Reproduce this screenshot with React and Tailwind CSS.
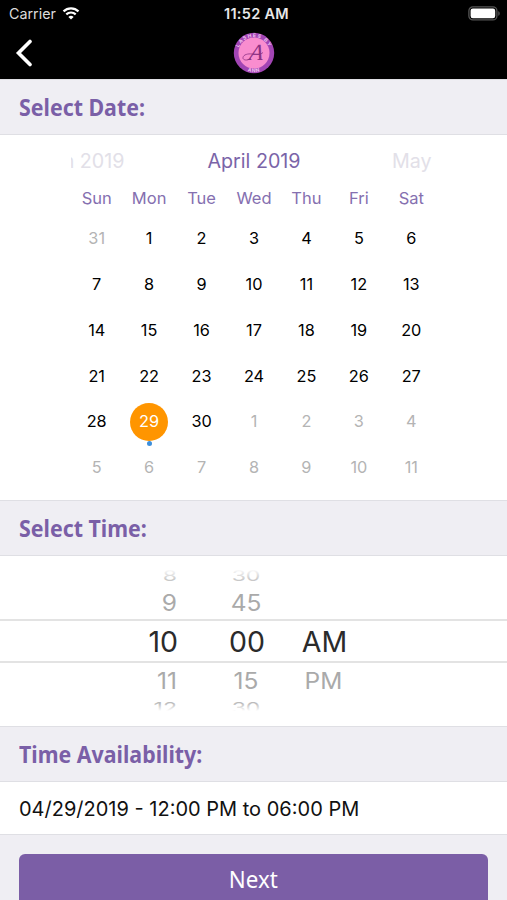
const WEEKDAYS = ['Sun', 'Mon', 'Tue', 'Wed', 'Thu', 'Fri', 'Sat'];

const DAYS = [
  { n: 31, out: true },
  ...Array.from({ length: 30 }, (_, i) => ({ n: i + 1, out: false })),
  ...Array.from({ length: 11 }, (_, i) => ({ n: i + 1, out: true })),
];

const SELECTED = 29;

function StatusBar() {
  return (
    <div className="grid h-[27px] grid-cols-3 items-center pl-[9px] pr-[6px] text-white">
      <div className="flex items-center gap-[6px]">
        <span className="pt-[2px] text-[14.300px] leading-none text-[#dcdcdc]">Carrier</span>
        <svg width="18" height="13" viewBox="0 0 17 13" fill="none" stroke="#fff" strokeWidth="2.2">
          <path d="M1 4.4a10.8 10.8 0 0 1 15 0" />
          <path d="M3.8 7.4a6.8 6.8 0 0 1 9.4 0" />
          <path d="M8.5 12.6 5.9 9.9a3.8 3.8 0 0 1 5.2 0z" fill="#fff" stroke="none" />
        </svg>
      </div>
      <div className="whitespace-nowrap pl-[3px] pt-[2px] text-center text-[14.500px] font-semibold leading-none tracking-[0.3px] text-[#e8e8e8]">
        11:52 AM
      </div>
      <svg className="justify-self-end" width="33" height="15" viewBox="0 0 33 15">
        <rect x="0.9" y="0.9" width="28" height="13" rx="4" fill="none" stroke="#555" strokeWidth="1.3" />
        <rect x="2.6" y="2.6" width="24.6" height="9.6" rx="2.2" fill="#fff" />
        <path d="M30.4 5.2c1.6.5 1.6 4 0 4.5z" fill="#666" />
      </svg>
    </div>
  );
}

function Logo() {
  return (
    <svg width="42" height="42" viewBox="0 0 42 42">
      <defs>
        <path id="ring-top" d="M5 21a16 16 0 0 1 32 0" />
        <path id="ring-bottom" d="M1.800 21a19.200 19.200 0 0 0 38.400 0" />
      </defs>
      <circle cx="21" cy="21" r="20.2" fill="#a245b4" />
      <circle cx="21" cy="21" r="15.5" fill="#f98dcf" />
      <g fill="#f0c4ee" fontFamily="Inter, sans-serif" fontWeight="700" fontSize="5" textAnchor="middle">
        <text letterSpacing="1.2">
          <textPath href="#ring-top" startOffset="50%">LASHES BY</textPath>
        </text>
        <text letterSpacing="0.6">
          <textPath href="#ring-bottom" startOffset="50%">ANN</textPath>
        </text>
      </g>
      <text
        x="23"
        y="28"
        transform="translate(-4.500 0) skewX(-8) translate(8 0)"
        fill="#8d3184"
        fontFamily="Liberation Serif, serif"
        fontStyle="italic"
        fontSize="23"
        textAnchor="middle"
      >
        A
      </text>
      <path
        d="M18 26c-3 3-8.500 2.500-8-.5s5-4 9-3.500c5 .8 8 1 11-1.500"
        fill="none"
        stroke="#8d3184"
        strokeWidth="0.8"
      />
    </svg>
  );
}

function NavBar() {
  return (
    <div className="grid h-[52px] grid-cols-[1fr_auto_1fr] items-center">
      <svg className="ml-[15px]" width="18" height="28" viewBox="0 0 18 28">
        <path d="M15 2.500 3.500 14 15 25.500" fill="none" stroke="#fff" strokeWidth="3.6" strokeLinecap="round" />
      </svg>
      <Logo />
    </div>
  );
}

function SectionTitle({ children }) {
  return (
    <div className="flex h-14 items-center border-y border-[#dfdfe4] bg-[#efeef3] pl-[19px]">
      <h2 className="origin-left scale-x-[0.89] font-['Noto_Sans'] text-[24px] font-bold leading-none text-[#7a5fa7]">
        {children}
      </h2>
    </div>
  );
}

function Calendar() {
  return (
    <div className="h-[365px] bg-white pl-px pt-[13px]">
      <div className="mx-auto grid w-[367px] grid-cols-3 items-center text-[19.700px] leading-[26px]">
        <div className="flex w-[54px] justify-end overflow-hidden whitespace-nowrap text-[#e2e0e8]">March 2019</div>
        <div className="whitespace-nowrap text-center text-[#7a64a8]">April 2019</div>
        <div className="pr-[6px] text-right text-[#e2e0e8]">May</div>
      </div>
      <div className="mx-auto mt-[13px] grid w-[367px] grid-cols-7 text-center text-[16.500px] leading-[22px] text-[#8570b0]">
        {WEEKDAYS.map((d) => (
          <div key={d}>{d}</div>
        ))}
      </div>
      <div className="mx-auto mt-[6.500px] grid w-[367px] auto-rows-[45.8px] grid-cols-7 text-[16.300px]">
        {DAYS.map((d, i) => {
          const selected = !d.out && d.n === SELECTED;
          return (
            <div key={i} className="relative grid place-items-center">
              <span
                className={`grid size-[38px] place-items-center rounded-full ${
                  selected ? 'bg-[#ff9500] text-white' : d.out ? 'text-[#b4b4b4]' : 'text-black'
                }`}
              >
                {d.n}
              </span>
              {selected && <span className="absolute bottom-[-2px] size-[5px] rounded-full bg-[#3d8fdc]" />}
            </div>
          );
        })}
      </div>
    </div>
  );
}

function WheelRow({ values, className }) {
  const [hour, minute, period] = values;
  return (
    <div className={`grid grid-cols-[48px_76px_78px] items-center pl-[130px] ${className}`}>
      <span className="text-right">{hour}</span>
      <span className="-mr-[62px] text-center">{minute}</span>
      <span className="-mr-[60px] pl-[3px] text-center">{period}</span>
    </div>
  );
}

function TimePicker() {
  return (
    <div className="flex h-[170px] flex-col overflow-hidden bg-white pt-[13px]">
      <div className="relative h-[16px] overflow-hidden">
        <WheelRow
          values={['8', '30', '']}
          className="-mt-[2px] -ml-px h-[11px] scale-y-[0.65] text-[23px] leading-none text-[#c8c8c8]"
        />
        <div className="absolute inset-x-0 top-0 h-[11px] bg-linear-to-b from-white to-transparent" />
      </div>
      <WheelRow values={['9', '45', '']} className="-ml-px h-[34px] scale-y-[0.92] text-[24.500px] text-[#aaa]" />
      <WheelRow
        values={['10', '00', 'AM']}
        className="h-[44px] border-y-2 border-[#e3e3e3] pb-[2px] text-[28.500px] text-[#2b2b2b]"
      />
      <WheelRow
        values={['11', '15', 'PM']}
        className="-ml-px h-[30px] scale-y-[0.92] pb-[3px] text-[24.500px] text-[#aaa]"
      />
      <div className="relative h-[20px] overflow-hidden">
        <WheelRow
          values={['12', '30', '']}
          className="-ml-px mt-[6px] h-[11px] scale-y-[0.65] text-[23px] leading-none text-[#bbb]"
        />
        <div className="absolute inset-x-0 bottom-[2px] h-[8px] bg-linear-to-t from-white to-transparent" />
        <div className="absolute inset-x-0 bottom-0 h-[2px] bg-white" />
      </div>
    </div>
  );
}

export default function App() {
  return (
    <div className="h-[900px] w-[507px] overflow-hidden bg-[#efeef3] font-['Inter',sans-serif]">
      <header className="bg-black">
        <StatusBar />
        <NavBar />
      </header>
      <SectionTitle>Select Date:</SectionTitle>
      <Calendar />
      <SectionTitle>Select Time:</SectionTitle>
      <TimePicker />
      <SectionTitle>Time Availability:</SectionTitle>
      <div className="flex h-[53px] items-center border-b border-[#dfdfe4] bg-white pl-[19px] pt-[2px] text-[20px] text-[#111]">
        04/29/2019 - 12:00 PM to 06:00 PM
      </div>
      <div className="px-[19px] pt-[19px]">
        <button
          type="button"
          className="h-[52px] w-full rounded-[6px] bg-[#7b5ea6] pb-[3px] font-['Noto_Sans'] text-[24px] leading-none text-white"
        >
          <span className="inline-block scale-x-[0.93]">Next</span>
        </button>
      </div>
    </div>
  );
}
